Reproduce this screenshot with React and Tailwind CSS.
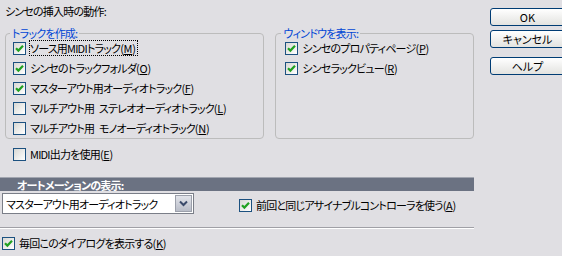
import React from "react";

const font =
  "font-['Noto_Sans_CJK_JP',sans-serif] [font-feature-settings:'palt'] text-[11px] tracking-[-0.8px] leading-[14px] text-black";

function Box({ checked }) {
  return (
    <span className="w-[13px] h-[13px] shrink-0 border border-[#1c5180] bg-gradient-to-br from-[#d8d8d4] to-white flex items-center justify-center">
      {checked && (
        <svg width="9" height="9" viewBox="0 0 9 9">
          <path
            d="M1 4.2 L3.4 6.6 L8 1.8"
            fill="none"
            stroke="#21a121"
            strokeWidth="2.2"
          />
        </svg>
      )}
    </span>
  );
}

function Check({ checked, label, k, focus, className = "" }) {
  return (
    <div className={"flex items-center h-[20px] gap-[4px] " + className}>
      <Box checked={checked} />
      <span
        className={
          "whitespace-nowrap pr-px " +
          (focus ? "outline outline-1 outline-dotted outline-black" : "")
        }
      >
        {label}
        <span className="tracking-[-0.3px]">
          (<u>{k}</u>)
        </span>
      </span>
    </div>
  );
}

function Button({ children, className = "" }) {
  return (
    <div
      className={
        "w-[75px] h-[18px] shrink-0 rounded-[3px] border border-[#003c74] bg-gradient-to-b from-white to-[#e3e3e0] flex items-center justify-center " +
        className
      }
    >
      {children}
    </div>
  );
}

export default function App() {
  return (
    <div className={"w-[562px] h-[256px] overflow-hidden bg-[#e0dfe3] flex " + font}>
      <div className="w-[474px] shrink-0 flex flex-col">
        <div className="pl-[5px] pt-[4px] h-[18px]">シンセの挿入時の動作:</div>

        <div className="flex mt-[8px]">
          <fieldset className="ml-[5px] w-[260px] h-[113px] border border-[#bcbcbc] rounded-[4px]">
            <legend className="ml-[4px] px-[2px] text-[#0046d5]">トラックを作成:</legend>
            <div className="-mt-[2px] pl-[7px]">
              <Check checked label="ソース用MIDIトラック" k="M" focus />
              <Check checked label="シンセのトラックフォルダ" k="O" />
              <Check checked label="マスターアウト用オーディオトラック" k="F" />
              <Check label={"マルチアウト用\u2002ステレオオーディオトラック"} k="L" />
              <Check label={"マルチアウト用\u2002モノオーディオトラック"} k="N" />
            </div>
          </fieldset>
          <fieldset className="ml-[11px] w-[199px] h-[113px] border border-[#bcbcbc] rounded-[4px]">
            <legend className="ml-[5px] px-[2px] text-[#0046d5]">ウィンドウを表示:</legend>
            <div className="-mt-[2px] pl-[9px]">
              <Check checked label="シンセのプロパティページ" k="P" />
              <Check checked label="シンセラックビュー" k="R" />
            </div>
          </fieldset>
        </div>

        <Check label="MIDI出力を使用" k="E" className="mt-[5px] pl-[13px]" />

        <div className="mt-[13px] h-[14px] bg-[#6b7282] border-t border-[#a2a6b0] pl-[17px] text-white font-bold flex items-center">
          オートメーションの表示:
        </div>

        <div className="mt-[2px] h-[21px] flex items-center">
          <div className="ml-[2px] w-[192px] h-[21px] bg-white border border-[#7a7e88] flex">
            <div className="flex-1 pl-[3px] flex items-center whitespace-nowrap">
              マスターアウト用オーディオトラック
            </div>
            <div className="w-[17px] m-px bg-gradient-to-b from-[#e2e4ea] to-[#b9bdc8] border border-[#9ca0ab] flex items-center justify-center">
              <svg width="9" height="7" viewBox="0 0 9 7">
                <path d="M1 1.5 L4.5 5 L8 1.5" fill="none" stroke="#3a4a6a" strokeWidth="2" />
              </svg>
            </div>
          </div>
          <Check
            checked
            label="前回と同じアサイナブルコントローラを使う"
            k="A"
            className="ml-[45px] mt-[3px]"
          />
        </div>

        <div className="mt-[13px] h-[2px] border-t border-[#a0a0a6] border-b border-b-white" />

        <Check checked label="毎回このダイアログを表示する" k="K" className="mt-[4px] pl-[2px]" />
      </div>

      <div className="ml-[16px] pt-[8px] flex flex-col shrink-0 tracking-normal">
        <Button>OK</Button>
        <Button className="mt-[4px]">キャンセル</Button>
        <Button className="mt-[9px]">ヘルプ</Button>
      </div>
    </div>
  );
}
